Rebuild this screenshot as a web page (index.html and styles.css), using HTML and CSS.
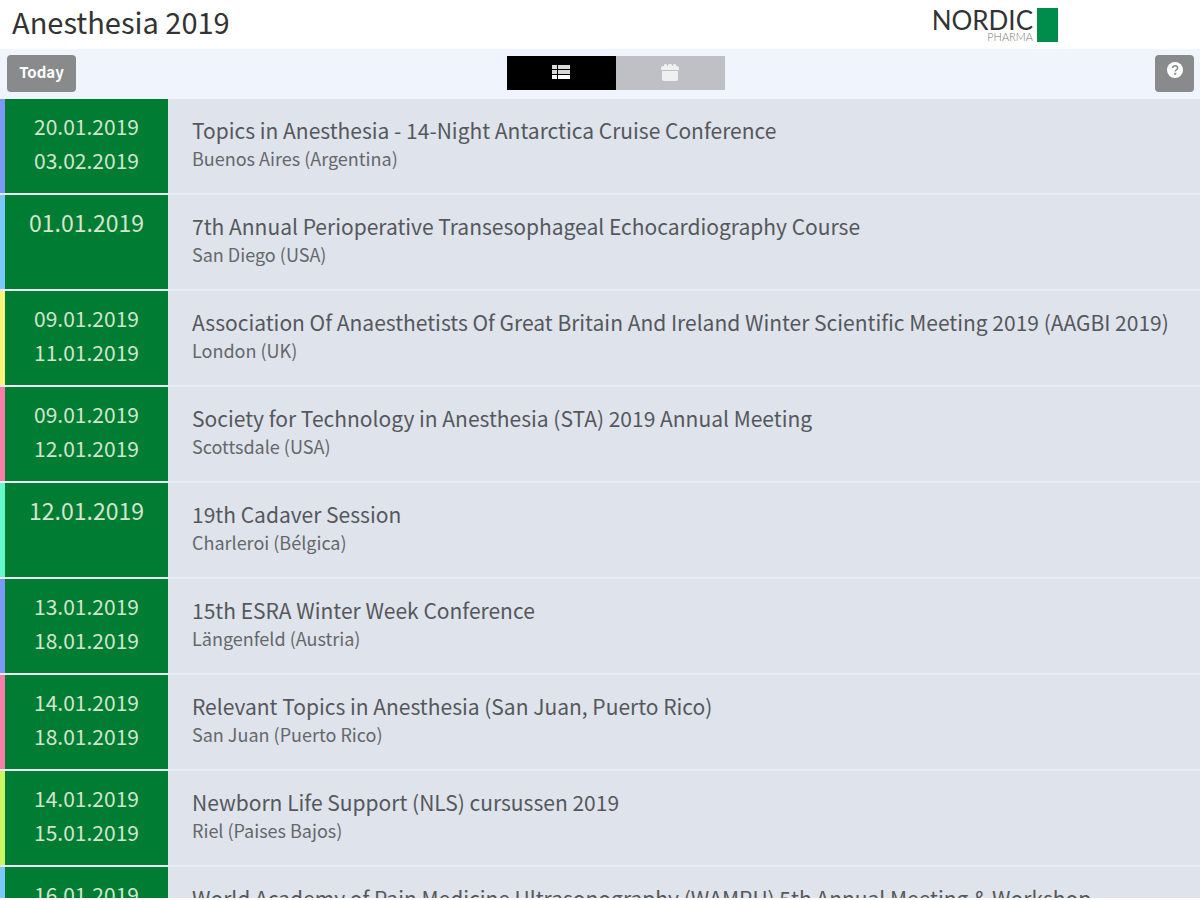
FILE: index.html
```html
<!DOCTYPE html>
<html lang="en">
  <head>
    <meta charset="utf-8" />
    <title>Anesthesia 2019</title>
    <meta name="viewport" content="width=device-width, initial-scale=1" />
    <link rel="stylesheet" href="styles.css">
  </head>
  <body>
    <header class="header">
      <h1>Anesthesia 2019</h1>
      <div class="logo">
        <div class="logo-text">
          <span class="logo-name">NORDIC</span>
          <span class="logo-sub">PHARMA</span>
        </div>
        <div class="logo-box"></div>
      </div>
    </header>

    <nav class="toolbar">
      <button type="button" class="btn">Today</button>
      <div class="view-switch">
        <button type="button" class="active" aria-label="List view">
          <svg width="18" height="15" viewBox="0 0 18 15" fill="#fff">
            <path d="M0 0h5v4H0zM6 0h12v4H6zM0 5h5v4H0zM6 5h12v4H6z" opacity=".85" />
            <path d="M0 10h5v4H0zM6 10h12v4H6z" />
          </svg>
        </button>
        <button type="button" aria-label="Calendar view">
          <svg width="18" height="17" viewBox="0 0 18 17" fill="#f0f0f2">
            <path d="M2 2h1V1q0-1 1.500-1T6 1v1h1V1q0-1 1.500-1h1Q11 0 11 1v1h1V1q0-1 1.500-1T15 1v1h1q2 0 2 2v2H0V4q0-2 2-2z" />
            <path d="M1 7h16v8q0 2-2 2H3q-2 0-2-2z" />
          </svg>
        </button>
      </div>
      <button type="button" class="btn help" aria-label="Help">
        <svg width="16" height="16" viewBox="0 0 16 16">
          <circle cx="8" cy="8" r="8" fill="#fff" />
          <path d="M5.500 6.200q.4-2.400 2.700-2.400 2.400.1 2.400 2.200 0 1.200-1.200 1.800Q8.200 8.400 8.200 9.600" fill="none" stroke="#888a8c" stroke-width="1.500" />
          <path d="M7.200 10.800h2v2h-2z" fill="#888a8c" />
        </svg>
      </button>
    </nav>

    <ul class="events">
      <li class="event blue">
        <div class="dates"><time>20.01.2019</time><time>03.02.2019</time></div>
        <div class="info">
          <h2>Topics in Anesthesia - 14-Night Antarctica Cruise Conference</h2>
          <p>Buenos Aires (Argentina)</p>
        </div>
      </li>
      <li class="event sky">
        <div class="dates single"><time>01.01.2019</time></div>
        <div class="info">
          <h2>7th Annual Perioperative Transesophageal Echocardiography Course</h2>
          <p>San Diego (USA)</p>
        </div>
      </li>
      <li class="event yellow">
        <div class="dates"><time>09.01.2019</time><time>11.01.2019</time></div>
        <div class="info">
          <h2>Association Of Anaesthetists Of Great Britain And Ireland Winter Scientific Meeting 2019 (AAGBI 2019)</h2>
          <p>London (UK)</p>
        </div>
      </li>
      <li class="event pink">
        <div class="dates"><time>09.01.2019</time><time>12.01.2019</time></div>
        <div class="info">
          <h2>Society for Technology in Anesthesia (STA) 2019 Annual Meeting</h2>
          <p>Scottsdale (USA)</p>
        </div>
      </li>
      <li class="event mint">
        <div class="dates single"><time>12.01.2019</time></div>
        <div class="info">
          <h2>19th Cadaver Session</h2>
          <p>Charleroi (Bélgica)</p>
        </div>
      </li>
      <li class="event blue">
        <div class="dates"><time>13.01.2019</time><time>18.01.2019</time></div>
        <div class="info">
          <h2>15th ESRA Winter Week Conference</h2>
          <p>Längenfeld (Austria)</p>
        </div>
      </li>
      <li class="event pink">
        <div class="dates"><time>14.01.2019</time><time>18.01.2019</time></div>
        <div class="info">
          <h2>Relevant Topics in Anesthesia (San Juan, Puerto Rico)</h2>
          <p>San Juan (Puerto Rico)</p>
        </div>
      </li>
      <li class="event lime">
        <div class="dates"><time>14.01.2019</time><time>15.01.2019</time></div>
        <div class="info">
          <h2>Newborn Life Support (NLS) cursussen 2019</h2>
          <p>Riel (Paises Bajos)</p>
        </div>
      </li>
      <li class="event sky">
        <div class="dates"><time>16.01.2019</time></div>
        <div class="info">
          <h2>World Academy of Pain Medicine Ultrasonography (WAMPU) 5th Annual Meeting &amp; Workshop</h2>
        </div>
      </li>
    </ul>
  </body>
</html>
```
FILE: styles.css
```css
* {
  box-sizing: border-box;
}
body {
  margin: 0;
  height: 100vh;
  padding-bottom: 2px;
  display: flex;
  flex-direction: column;
  background: #fff;
  font-family: "Noto Sans CJK SC", "Open Sans", sans-serif;
  overflow: hidden;
}
h1, h2, p, ul {
  margin: 0;
  padding: 0;
  font-weight: 400;
}
button {
  border: 0;
  padding: 0;
  font-family: inherit;
  cursor: pointer;
}

/* header */
.header {
  display: flex;
  flex-shrink: 0;
  justify-content: space-between;
  height: 49px;
  padding: 0 142px 0 12px;
}
.header h1 {
  font-size: 29px;
  line-height: 42px;
  color: #333;
}
.logo {
  display: flex;
  gap: 4px;
  padding-top: 8px;
}
.logo-text {
  display: flex;
  flex-direction: column;
  align-items: flex-end;
  font-family: Lato, sans-serif;
}
.logo-name {
  font-size: 26px;
  line-height: 24px;
  color: #333;
}
.logo-sub {
  font-size: 11px;
  line-height: 9px;
  font-weight: 300;
  color: #777;
}
.logo-box {
  width: 21px;
  height: 34px;
  background: #008c4a;
}

/* toolbar */
.toolbar {
  display: flex;
  flex-shrink: 0;
  align-items: center;
  justify-content: space-between;
  height: 50px;
  padding: 0 6px 2px 7px;
  background: #f0f4fd;
}
.btn {
  width: 69px;
  height: 37px;
  padding-bottom: 2px;
  border-radius: 4px;
  background: #888a8c;
  color: #fff;
  font-size: 15px;
  line-height: 20px;
  font-weight: 700;
}
.help {
  width: 39px;
}
.view-switch {
  display: flex;
}
.view-switch button {
  display: flex;
  align-items: center;
  justify-content: center;
  width: 109px;
  height: 34px;
  padding-bottom: 2px;
  background: #bfc0c5;
}
.view-switch .active {
  background: #000;
}

/* event list */
.events {
  flex: 1;
  min-height: 0;
  overflow: hidden;
  list-style: none;
}
.event {
  display: flex;
  height: 96px;
  border-bottom: 2px solid #eaeef4;
  background: #dfe3eb;
}
.event::before {
  content: "";
  width: 5px;
  background: var(--mark);
}
.blue { --mark: #7d96f8; }
.sky { --mark: #7dc8fa; }
.yellow { --mark: #faf57d; }
.pink { --mark: #f97da9; }
.mint { --mark: #68f7cb; }
.lime { --mark: #ccf664; }

.dates {
  display: flex;
  flex-direction: column;
  width: 163px;
  padding-top: 10px;
  background: #007d33;
  color: #d3e5d0;
  font-size: 21px;
  line-height: 34px;
  text-align: center;
}
.single {
  font-size: 23px;
}
.info {
  flex: 1;
  min-width: 0;
  padding: 17px 0 0 24px;
  white-space: nowrap;
  color: #54585c;
}
.info h2 {
  font-size: 21px;
  line-height: 28px;
}
.info p {
  font-size: 18px;
  line-height: 28px;
  color: #64686c;
}
```
